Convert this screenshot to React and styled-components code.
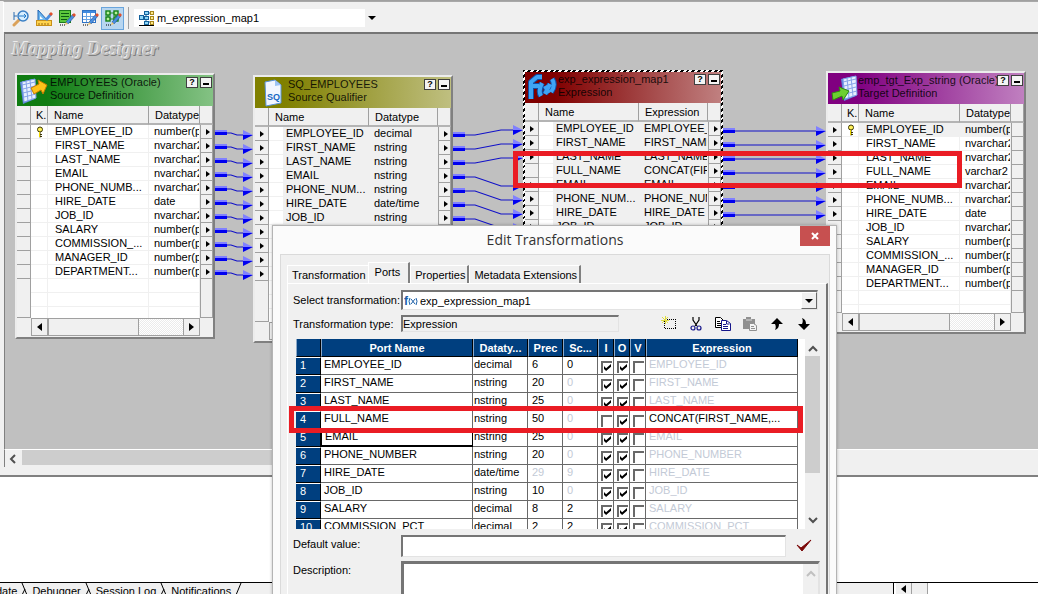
import React, { useState } from 'react'
import styled, { createGlobalStyle, css } from 'styled-components'

const GlobalStyle = createGlobalStyle`
    * {
        box-sizing: border-box;
    }

    body {
        margin: 0;
        background: #f0f0f0;
        color: #000;
        font-family: 'Liberation Sans', Arial, sans-serif;
        font-size: 11px;
        line-height: 14px;
    }

    button, input, select, textarea {
        font: inherit;
        color: inherit;
        margin: 0;
        padding: 0;
        border: 0;
        border-radius: 0;
        outline: none;
    }

    svg {
        display: block;
    }
`

const Screen = styled.div`
    position: relative;
    display: flex;
    flex-direction: column;
    height: 100vh;
    overflow: hidden;
    border-top: 1px solid #a0a0a0;
`

/* ---------- toolbar ---------- */

const Toolbar = styled.header`
    display: flex;
    align-items: center;
    height: 31px;
    margin-left: 3px;
    padding: 2px 0 0 5px;
    border-top: 1px solid #a8a8a8;
    border-left: 1px solid #fff;
    background: #f0f0f0;
`

const ToolButton = styled.button`
    display: flex;
    align-items: center;
    justify-content: center;
    width: 23px;
    height: 23px;
    background: ${p => (p.$active ? '#b8d6f0' : 'transparent')};
    border: 1px solid ${p => (p.$active ? '#6aa5dc' : 'transparent')};
`

const Divider = styled.span`
    width: 1px;
    height: 22px;
    margin: 0 5px 0 4px;
    background: #a0a0a0;
`

const MapPicker = styled.label`
    display: flex;
    align-items: center;
    width: 245px;
    height: 18px;
    padding-left: 5px;
    background: #fff;
`

const Select = styled.select`
    flex: 1;
    min-width: 0;
    appearance: none;
    background: transparent;
    padding-left: 2px;
`

const DropArrow = styled.span`
    display: flex;
    align-items: center;
    justify-content: center;
    width: ${p => (p.$raised ? '16px' : '14px')};
    align-self: stretch;
    background: #f0f0f0;
    pointer-events: none;
    ${p => p.$raised && css`
        border: 1px solid;
        border-color: #fff #696969 #696969 #fff;
    `}

    &::after {
        content: '';
        border: 4px solid transparent;
        border-top-color: #000;
        border-bottom: 0;
    }
`

/* ---------- canvas ---------- */

const Workspace = styled.main`
    position: relative;
    flex: 1;
    min-height: 0;
    margin-left: 4px;
    background: #c0c0c0;
    border-top: 2px solid #757575;
    border-left: 1px solid #808080;
    overflow: hidden;
`

const Watermark = styled.h1`
    margin: 4px 0 0 7px;
    font: italic bold 19px/22px 'Liberation Serif', 'Times New Roman', serif;
    color: #c0c0c0;
    text-shadow: -1px -1px 0 #ececec, 1px 1px 0 #808080;
`

const Wires = styled.svg`
    position: absolute;
    top: 0;
    left: 0;
    overflow: visible;
`

const Node = styled.section`
    position: absolute;
    left: ${p => p.$x}px;
    top: ${p => p.$y}px;
    width: 200px;
    background: #f0f0f0;
    border: 2px solid;
    border-color: #ececec #808080 #808080 #ececec;

    ${p => p.$selected && css`
        border-color: transparent;
        background:
            linear-gradient(#f0f0f0, #f0f0f0) padding-box,
            repeating-linear-gradient(135deg, #000 0 2px, #fff 2px 4px) border-box;
    `}
`

const NodeTitle = styled.div`
    display: flex;
    height: 31px;
    padding-right: 1px;
    background: linear-gradient(90deg, ${p => p.$from} 15%, ${p => p.$to});
`

const NodeIcon = styled.span`
    width: ${p => (p.$tight ? '30px' : '33px')};
    flex: none;
    padding: 1px 0 0 2px;
`

const NodeName = styled.div`
    flex: 1;
    min-width: 0;
    padding-top: 1px;
    line-height: 13px;
    white-space: nowrap;
    color: rgba(0, 0, 0, 0.85);
`

const NodeButton = styled.button`
    flex: none;
    width: 12px;
    height: 11px;
    margin: 2px 0 0 2px;
    background: #f4f4f4;
    border: 1px solid #404040;
    font: bold 9px/9px 'Liberation Sans', Arial, sans-serif;
    display: flex;
    align-items: center;
    justify-content: center;
`

const MinBar = styled.span`
    width: 6px;
    height: 2px;
    margin-top: 3px;
    background: #000;
`

const PortTable = styled.table`
    width: 100%;
    table-layout: fixed;
    border-spacing: 0;
    background: #fff;

    th, td {
        padding: 0;
        overflow: hidden;
        white-space: nowrap;
        text-align: left;
        font-weight: normal;
    }

    thead th {
        height: 19px;
        padding-left: 6px;
        background: #f0f0f0;
        border-right: 1px solid #a0a0a0;
        border-bottom: 2px solid #b4b4b4;
    }

    thead th.key {
        padding-left: 5px;
    }
`

const PortRow = styled.tr`
    td {
        height: 14px;
        line-height: 13px;
        padding-left: 5px;
        border-bottom: 1px solid #f0f0f0;
        border-right: 1px solid #f0f0f0;
        background: ${p => (p.$shaded ? '#f0f0f0' : '#fff')};
    }

    td.name {
        padding-left: ${p => (p.$keyed ? 7 : 2)}px;
    }

    td.key {
        padding-left: 5px;
        background: #fff;
    }
`

const Pin = styled.td`
    && {
        padding: 0;
        background: #f0f0f0;
        border-right: 1px solid #a0a0a0;
        border-left: ${p => (p.$end ? '1px solid #a0a0a0' : '0')};
        border-bottom: 1px solid #a0a0a0;
    }
`

const PinMark = styled.span`
    display: block;
    width: 0;
    margin-left: 5px;
    border: 3px solid transparent;
    border-left: 4px solid #000;
    border-right: 0;
`

const FillRow = styled.tr`
    td {
        height: ${p => p.$h}px;
        border-right: 1px solid #f0f0f0;
        background: repeating-linear-gradient(#fff 0 13px, #f0f0f0 13px 14px);
    }
`

const NodeFooter = styled.div`
    display: flex;
    height: 19px;
    padding: 0 13px 1px 14px;
`

const ScrollTrack = styled.div`
    display: flex;
    flex: 1;
    border: 1px solid #a0a0a0;
    background: repeating-conic-gradient(#fff 0 25%, #ebebeb 0 50%) 0 0 / 2px 2px;
`

const ScrollButton = styled.button`
    display: flex;
    align-items: center;
    justify-content: center;
    width: 16px;
    background: #f0f0f0;
    border: solid #a0a0a0;
    border-width: ${p => (p.$right ? '0 0 0 1px' : '0 1px 0 0')};
`

const ScrollThumb = styled.span`
    width: 91px;
    margin-right: auto;
    background: #f0f0f0;
    border: solid #a0a0a0;
    border-width: 0 1px;
`

const CanvasScroll = styled.div`
    display: flex;
    align-items: center;
    height: 18px;
    margin-left: 4px;
    padding-left: 4px;
    border-left: 1px solid #808080;
    border-top: 1px solid #fff;
    background: #f0f0f0;
`

const CanvasThumb = styled.span`
    align-self: stretch;
    width: 70%;
    margin: 0 0 2px 5px;
    background: #cdcdcd;
`

/* ---------- output panel ---------- */

const Output = styled.section`
    height: 108px;
    margin-top: 8px;
    background: #fff;
    border-top: 2px solid #808080;
    border-bottom: 1px solid #000;
`

const OutputTabs = styled.nav`
    display: flex;
    height: 11px;
    margin-left: -4px;
    overflow: hidden;
    background: #f0f0f0;
`

const OutputTab = styled.button`
    background: transparent;
    height: 16px;
    line-height: 16px;
    white-space: nowrap;
`

const TabSlash = styled.svg`
    flex: none;
    margin: 0 4px;
`

const OutputScroll = styled.div`
    display: flex;
    width: 145px;
    margin-left: auto;
    border-left: 1px solid #000;
    padding-left: 2px;
    background: #fff;
`

/* ---------- dialog ---------- */

const Dialog = styled.div`
    position: absolute;
    left: 272px;
    top: 224px;
    width: 565px;
    padding: 0 6px 0 7px;
    background: #fbfbfb;
    border: 1px solid #b4b4b4;
    box-shadow: 0 0 3px rgba(0, 0, 0, 0.25);
`

const DialogTitle = styled.div`
    display: flex;
    align-items: flex-start;
    height: 28px;

    h2 {
        flex: 1;
        margin: 0 -30px 0 0;
        font: 14px/28px 'Open Sans', 'Noto Sans', sans-serif;
        text-align: center;
        color: #333;
    }
`

const CloseButton = styled.button`
    display: flex;
    align-items: center;
    justify-content: center;
    width: 30px;
    height: 20px;
    background: #c75050;
`

const Client = styled.div`
    padding: 7px 1px 0 6px;
    background: #f0f0f0;
    border: 1px solid #dadada;
`

const Tabs = styled.div`
    display: flex;
    align-items: flex-end;
    height: 21px;
`

const Tab = styled.button`
    height: ${p => (p.$active ? '21px' : '18px')};
    padding: ${p => (p.$active ? '0 8px 3px 6px' : '0 2px 0 4px')};
    background: #f0f0f0;
    border: solid;
    border-width: 1px 2px 0 1px;
    border-color: #fff #808080 #fff #fff;
    white-space: nowrap;

    &:first-child {
        border-right: 0;
    }
`

const Panel = styled.div`
    padding: 6px 6px 0 5px;
    border: solid;
    border-width: 1px 2px 0 1px;
    border-color: #fff #757575 #fff #fff;
`

const Field = styled.div`
    display: flex;
    align-items: ${p => (p.$top ? 'flex-start' : 'center')};
    margin-bottom: ${p => p.$gap}px;
`

const Label = styled.label`
    flex: none;
    width: 108px;
    padding-top: ${p => (p.$top ? '2px' : '0')};
    white-space: nowrap;
`

const inset = css`
    border: solid;
    border-width: 2px 1px 1px 2px;
    border-color: #757575 #e3e3e3 #e3e3e3 #757575;
`

const Combo = styled.div`
    ${inset}
    display: flex;
    flex: 1;
    align-items: center;
    height: 20px;
    margin-right: 2px;
    padding-left: 1px;
    background: #fff;
`

const TypeBox = styled.input`
    ${inset}
    width: 218px;
    height: 17px;
    background: #f0f0f0;
`

const Tools = styled.div`
    display: flex;
    flex: 1;
    justify-content: space-between;
    padding: 0 8px 0 42px;
`

const IconButton = styled.button`
    display: flex;
    align-items: center;
    justify-content: center;
    width: 16px;
    height: 16px;
    background: transparent;
`

const GridWrap = styled.div`
    display: flex;
    height: 190px;
    margin: 0 0 6px 3px;
    overflow: hidden;
    background: #fff;
`

const Grid = styled.table`
    flex: 1;
    width: 0;
    height: max-content;
    table-layout: fixed;
    border-spacing: 0;

    th {
        height: 18px;
        padding: 0;
        overflow: hidden;
        background: #003f7f;
        border-right: 1px solid #000;
        border-bottom: 1px solid #000;
        border-left: 1px solid #8aa8c8;
        color: #fff;
        font: bold 11px/16px 'Liberation Sans', Arial, sans-serif;
        white-space: nowrap;
    }

    td {
        height: 18px;
        padding: 0;
        vertical-align: top;
        overflow: hidden;
        border-right: 1px solid #696969;
        border-bottom: 1px solid #696969;
        white-space: nowrap;
    }
`

const IndexCell = styled.th`
    && {
        padding-left: 4px;
        border-left: 0;
        border-top: 1px solid #fff;
        text-align: left;
        font: inherit;
        line-height: 14px;
        vertical-align: top;
    }
`

const TextCell = styled.td`
    && {
        padding-left: ${p => p.$pad || 3}px;
        color: ${p => (p.$muted ? '#c3cad6' : '#000')};
        ${p => p.$focused && css`
            border: 1px solid #000;
            border-top-width: 0;
            border-bottom-width: 2px;
        `}
    }
`

const CheckCell = styled.td`
    && {
        padding: 4px 0 0 3px;
    }
`

const Check = styled.input`
    display: block;
    position: relative;
    width: 11px;
    height: 12px;
    appearance: none;
    background: #fff;
    border: solid #696969;
    border-width: 2px 0 0 2px;

    &:checked::after {
        content: '';
        position: absolute;
        left: 1px;
        top: 1px;
        width: 7px;
        height: 7px;
        background: #000;
        clip-path: polygon(0 30%, 30% 60%, 100% 0, 100% 38%, 30% 100%, 0 70%);
    }
`

const VScroll = styled.div`
    display: flex;
    flex-direction: column;
    align-items: center;
    width: 15px;
    margin-left: ${p => p.$gap || 0}px;
    padding: 6px 0 4px;
    background: #f0f0f0;
`

const VThumb = styled.span`
    width: 15px;
    height: 117px;
    margin: 3px 0 auto;
    background: #cdcdcd;
`

const DefaultInput = styled.input`
    ${inset}
    flex: 1;
    height: 22px;
    background: #fff;
`

const ApplyButton = styled.button`
    width: 34px;
    padding-left: 10px;
    background: transparent;
`

const DescriptionBox = styled.div`
    ${inset}
    border-width: 3px 2px 2px 3px;
    display: flex;
    flex: 1;
    height: 60px;
    background: #fff;

    textarea {
        flex: 1;
        resize: none;
    }
`

const Highlight = styled.div`
    position: absolute;
    left: ${p => p.$x}px;
    top: ${p => p.$y}px;
    width: ${p => p.$w}px;
    height: ${p => p.$h}px;
    border: 5px solid #ea1c24;
    pointer-events: none;
`

/* ---------- icons ---------- */

const Pencil = () => (
    <g>
        <path d="M15 5l2 2-7 8-2-2z" fill="#4a8fe0" stroke="#1d4f9a" strokeWidth=".6" />
        <path d="M14 6l2-2 2 2-2 2z" fill="#e0502c" />
        <path d="M8 13l2 2-3 1z" fill="#f6c76a" />
        <path d="M2 16h1M4 16h1M6 16h1" stroke="#000" />
    </g>
)

const ZoomIcon = () => (
    <svg width="18" height="18">
        <path d="M2 3v8M2 7h3" stroke="#2a6db0" fill="none" />
        <path d="M2 16l5-5" stroke="#dba25a" strokeWidth="3" strokeLinecap="round" />
        <circle cx="11" cy="7" r="5" fill="#d8efff" stroke="#3a7fc4" strokeWidth="1.5" />
        <path d="M7 7h7M12 5l2 2-2 2" stroke="#1f78c8" fill="none" />
    </svg>
)

const RulerIcon = () => (
    <svg width="18" height="18">
        <path d="M3 1v11h10z" fill="#6db6ee" stroke="#1f64b4" />
        <path d="M5 7v3h3z" fill="#fff" />
        <rect x="1.5" y="11.5" width="15" height="5" fill="#ffd34d" stroke="#c8901a" />
        <path d="M4 14v2M7 14v2M10 14v2M13 14v2" stroke="#9a6a10" />
        <path d="M15 4l2 2-5 6-2-2z" fill="#4a8fe0" />
        <path d="M14 5l2-2 2 2-2 2z" fill="#e0502c" />
    </svg>
)

const ListIcon = () => (
    <svg width="18" height="18">
        <rect x="1.5" y="1.5" width="11" height="12" fill="#5cc83c" stroke="#1c7a1c" />
        <path d="M3 4.5h8M3 7.5h8M3 10.5h6" stroke="#0c5a14" />
        <Pencil />
    </svg>
)

const TableIcon = () => (
    <svg width="18" height="18">
        <rect x="1.5" y="1.5" width="13" height="12" fill="#fff" stroke="#2f73c4" />
        <path d="M2 3h12" stroke="#3f8be0" strokeWidth="2" />
        <path d="M2 7.5h12M2 10.5h12M5.5 4v9M9.5 4v9" stroke="#6aa5e4" />
        <Pencil />
    </svg>
)

const MapEditIcon = () => (
    <svg width="18" height="18">
        <path d="M5 4h7M5 10h7M4 4v6M12 4v6" stroke="#1f8a1f" fill="none" />
        <g fill="#b6f09a" stroke="#148014" strokeWidth="1.4">
            <rect x="2" y="2" width="4" height="4" />
            <rect x="10" y="2" width="4" height="4" />
            <rect x="2" y="8" width="4" height="4" />
            <rect x="10" y="8" width="4" height="4" />
        </g>
        <Pencil />
    </svg>
)

const MappingIcon = () => (
    <svg width="16" height="16">
        <path d="M3 7h6M7 3v9M7 3h4M7 12h4" stroke="#1c5f9a" fill="none" />
        <g fill="#8fd8f8" stroke="#14619c">
            <rect x=".5" y="5.5" width="4" height="4" />
            <rect x="5.5" y="1.5" width="4" height="3" />
            <rect x="5.5" y="6.5" width="4" height="3" />
            <rect x="5.5" y="11.5" width="4" height="3" />
        </g>
        <g fill="#ffe98a" stroke="#a8871c">
            <rect x="11.5" y="1.5" width="3" height="3" />
            <rect x="11.5" y="6.5" width="3" height="3" />
            <rect x="11.5" y="11.5" width="3" height="3" />
        </g>
        <path d="M0 15.5h15" stroke="#000" />
    </svg>
)

const Sheet = () => (
    <g>
        <path d="M1 6l13-3 2 20-12 5z" fill="#5f86dc" />
        <path d="M3 6l13-3 1 19-12 4z" fill="#e6efff" stroke="#7fa0ea" />
        <path d="M3 9l13-3M4 13l12-3M4 17l12-3M5 21l12-3M7 5l2 20M11 4l2 19" stroke="#86a4e8" />
    </g>
)

const SourceIcon = () => (
    <svg width="30" height="30">
        <Sheet />
        <path d="M12 12l8-4-1-4 9 5-4 9-2-4-7 4z" fill="#ffc21a" stroke="#c47a00" />
    </svg>
)

const TargetIcon = () => (
    <svg width="28" height="30">
        <g transform="translate(10 -1)"><Sheet /></g>
        <path d="M2 19l8-2-1-4 10 4-6 9-1-4-9 4z" fill="#6cd030" stroke="#2f8a10" />
    </svg>
)

const SqIcon = () => (
    <svg width="30" height="30">
        <path d="M8 4l10-2 6 5v18l-15 3z" fill="#f2f7ff" stroke="#5a93dc" />
        <path d="M18 2v6l6-1z" fill="#9cc4f4" />
        <text x="10" y="22" fontFamily="Liberation Sans, sans-serif" fontWeight="bold" fontSize="9" fill="#1668c4">SQ</text>
    </svg>
)

const FxIcon = () => (
    <svg width="30" height="30">
        <g fill="none" stroke="#0d4fa8" strokeWidth="6" strokeLinejoin="round">
            <path d="M4 26V9l6-5h5M3 13h9M15 10q-4 8-1 13M18 13l4 7M23 11l-5 10M25 6q4 6-1 13" />
        </g>
        <g fill="none" stroke="#3fa4f4" strokeWidth="4" strokeLinejoin="round">
            <path d="M4 26V9l6-5h5M3 13h9M15 10q-4 8-1 13M18 13l4 7M23 11l-5 10M25 6q4 6-1 13" />
        </g>
    </svg>
)

const KeyIcon = () => (
    <svg width="8" height="12">
        <circle cx="4" cy="3.5" r="2.5" fill="#fff15a" stroke="#3a3400" />
        <path d="M4 6v5.5M4 8.5h2M4 10.5h2" stroke="#3a3400" />
        <path d="M3.5 6v5" stroke="#f0d800" />
    </svg>
)

const Chevron = ({ d, color = '#505050', w = 10, h = 8 }) => (
    <svg width={w} height={h}>
        <path d={d} fill="none" stroke={color} strokeWidth="2" />
    </svg>
)

const Triangle = ({ left }) => (
    <svg width="5" height="8">
        <path d={left ? 'M5 0v8L0 4z' : 'M0 0v8l5-4z'} />
    </svg>
)

const NewIcon = () => (
    <svg width="16" height="16" shapeRendering="crispEdges">
        <rect x="3.5" y="3.5" width="11" height="9" fill="none" stroke="#000" strokeDasharray="1 1" />
        <path d="M4.5 0v8M0 4.5h8M1 1l6 6M7 1L1 7" stroke="#e0dc40" />
    </svg>
)

const CutIcon = () => (
    <svg width="16" height="16">
        <path d="M5 1v3l4 6M11 1v3l-4 6" fill="none" stroke="#000" strokeWidth="1.2" />
        <circle cx="5" cy="12" r="2" fill="none" stroke="#16168a" strokeWidth="1.2" />
        <circle cx="11" cy="12" r="2" fill="none" stroke="#16168a" strokeWidth="1.2" />
    </svg>
)

const CopyIcon = () => (
    <svg width="16" height="16">
        <path d="M.5 1.5h5l3 3v7h-8z" fill="#fff" stroke="#000" />
        <path d="M2 5.5h3M2 7.5h4M2 9.5h4" stroke="#000" />
        <path d="M6.5 4.5h5l4 3v7h-9z" fill="#fff" stroke="#16168a" />
        <path d="M8 8.5h3M8 10.5h5M8 12.5h5M11.5 5v3h3" fill="none" stroke="#16168a" />
    </svg>
)

const PasteIcon = () => (
    <svg width="16" height="16">
        <path d="M1 3h3V1h5v2h4v10H1z" fill="#909090" />
        <path d="M4 4h6" stroke="#d8d8d8" />
        <path d="M7.5 7.5h4l3 2v5h-7z" fill="#f4f4f4" stroke="#909090" />
        <path d="M9 10.5h3M9 12.5h4" stroke="#909090" />
    </svg>
)

const MoveIcon = ({ down }) => (
    <svg width="14" height="14">
        <path
            d="M7 1l6 6H9c0 3-1 5-4 6 1-2 1-4 0-6H1z"
            transform={down ? 'matrix(1 0 0 -1 0 14)' : undefined}
        />
    </svg>
)

/* ---------- data ---------- */

const tableRows = [
    ['EMPLOYEE_ID', 'number(p,s)'],
    ['FIRST_NAME', 'nvarchar2'],
    ['LAST_NAME', 'nvarchar2'],
    ['EMAIL', 'nvarchar2'],
    ['PHONE_NUMB...', 'nvarchar2'],
    ['HIRE_DATE', 'date'],
    ['JOB_ID', 'nvarchar2'],
    ['SALARY', 'number(p,s)'],
    ['COMMISSION_...', 'number(p,s)'],
    ['MANAGER_ID', 'number(p,s)'],
    ['DEPARTMENT...', 'number(p,s)'],
]

const nodes = [
    {
        id: 'src', x: 10, y: 39, title: 'EMPLOYEES (Oracle)', kind: 'Source Definition',
        from: '#0f7c12', to: '#84c284', icon: <SourceIcon />, keyed: true, type: 'Datatype', fill: 39,
        rows: tableRows, ins: [],
    },
    {
        id: 'sq', x: 248, y: 41, title: 'SQ_EMPLOYEES', kind: 'Source Qualifier',
        from: '#808000', to: '#bfbf80', icon: <SqIcon />, type: 'Datatype', fill: 41, shaded: true,
        rows: [
            ['EMPLOYEE_ID', 'decimal'],
            ['FIRST_NAME', 'nstring'],
            ['LAST_NAME', 'nstring'],
            ['EMAIL', 'nstring'],
            ['PHONE_NUM...', 'nstring'],
            ['HIRE_DATE', 'date/time'],
            ['JOB_ID', 'nstring'],
            ['SALARY', 'decimal'],
            ['COMMISSIO...', 'decimal'],
            ['MANAGER_ID', 'decimal'],
            ['DEPARTME...', 'decimal'],
        ],
    },
    {
        id: 'exp', x: 518, y: 36, title: 'exp_expression_map1', kind: 'Expression',
        from: '#800000', to: '#c08080', icon: <FxIcon />, type: 'Expression', fill: 20, shaded: true, selected: true,
        ins: [0, 1, 2, 4, 5, 6, 7],
        rows: [
            ['EMPLOYEE_ID', 'EMPLOYEE_ID'],
            ['FIRST_NAME', 'FIRST_NAME'],
            ['LAST_NAME', 'LAST_NAME'],
            ['FULL_NAME', 'CONCAT(FIRST_NAME'],
            ['EMAIL', 'EMAIL'],
            ['PHONE_NUM...', 'PHONE_NUMBER'],
            ['HIRE_DATE', 'HIRE_DATE'],
            ['JOB_ID', 'JOB_ID'],
        ],
    },
    {
        id: 'tgt', x: 821, y: 37, title: 'emp_tgt_Exp_string (Oracle)', kind: 'Target Definition',
        from: '#800080', to: '#c080c0', icon: <TargetIcon />, keyed: true, type: 'Datatype', fill: 22,
        rows: [...tableRows.slice(0, 3), ['FULL_NAME', 'varchar2'], ...tableRows.slice(3)],
        ins: [0, 1, 2, 3, 4, 5, 6],
        outs: [],
    },
]

const ports = [
    ['EMPLOYEE_ID', 'decimal', '6', '0', true],
    ['FIRST_NAME', 'nstring', '20', '0', true],
    ['LAST_NAME', 'nstring', '25', '0', true],
    ['FULL_NAME', 'nstring', '50', '0', false, 'CONCAT(FIRST_NAME,...'],
    ['EMAIL', 'nstring', '25', '0', true],
    ['PHONE_NUMBER', 'nstring', '20', '0', true],
    ['HIRE_DATE', 'date/time', '29', '9', true],
    ['JOB_ID', 'nstring', '10', '0', true],
    ['SALARY', 'decimal', '8', '2', true],
    ['COMMISSION_PCT', 'decimal', '2', '2', true],
]

// x1, y1 leave the right pin, x2, y2 reach the left pin
const wires = [
    ...tableRows.map((r, i) => [210, 99 + i * 14, 248, 101 + i * 14]),
    ...[0, 1, 2, 4, 5, 6, 7].map((row, i) => [448, 101 + i * 14, 518, 96 + row * 14]),
    ...[0, 1, 2, 3, 4, 5, 6].map(i => [718, 97 + i * 14, 821, 97 + i * 14]),
]

function Wire({ points: [x1, y1, x2, y2] }) {
    const bend = x2 - x1 > 50 ? 22 : 16
    return (
        <g>
            <rect x={x1} y={y1 - 3} width="12" height="2" fill="#8080ff" />
            <rect x={x1} y={y1 - 1} width="12" height="3" fill="#0000f0" />
            <path
                d={`M${x1 + 12} ${y1}H${x1 + bend}L${x2 - bend} ${y2}H${x2 - 8}`}
                fill="none"
                stroke="#1010c8"
                strokeWidth="1.2"
            />
            <path d={`M${x2 - 10} ${y2 - 5}L${x2} ${y2}h-10z`} fill="#8080ff" />
            <path d={`M${x2 - 10} ${y2 + 5}L${x2} ${y2}h-10z`} fill="#0000f0" />
        </g>
    )
}

function MapNode({ node }) {
    const has = (list, i) => !list || list.includes(i)
    return (
        <Node $x={node.x} $y={node.y} $selected={node.selected}>
            <NodeTitle $from={node.from} $to={node.to}>
                <NodeIcon $tight={node.title.length > 24}>{node.icon}</NodeIcon>
                <NodeName>{node.title}<br />{node.kind}</NodeName>
                <NodeButton aria-label="Help">?</NodeButton>
                <NodeButton aria-label="Minimize"><MinBar /></NodeButton>
            </NodeTitle>
            <PortTable>
                <colgroup>
                    <col style={{ width: 14 }} />
                    <col style={{ width: node.keyed ? 17 : 15 }} />
                    <col style={{ width: node.keyed ? 101 : 85 }} />
                    <col />
                    <col style={{ width: 13 }} />
                </colgroup>
                <thead>
                    <tr>
                        <th />
                        {node.keyed && <th className="key">K.</th>}
                        <th colSpan={node.keyed ? 1 : 2}>Name</th>
                        <th>{node.type}</th>
                        <th />
                    </tr>
                </thead>
                <tbody>
                    {node.rows.map(([name, type], i) => (
                        <PortRow key={name} $keyed={node.keyed} $shaded={node.shaded || (node.id === 'tgt' && i === 0)}>
                            <Pin>{has(node.ins, i) && <PinMark />}</Pin>
                            <td className="key">{node.keyed && i === 0 && <KeyIcon />}</td>
                            <td className="name">{name}</td>
                            <td>{type}</td>
                            <Pin $end>{has(node.outs, i) && <PinMark />}</Pin>
                        </PortRow>
                    ))}
                    <FillRow $h={node.fill}>
                        <Pin />
                        <td />
                        <td />
                        <td />
                        <Pin $end />
                    </FillRow>
                </tbody>
            </PortTable>
            <NodeFooter>
                <ScrollTrack>
                    <ScrollButton aria-label="Scroll left"><Triangle left /></ScrollButton>
                    <ScrollThumb />
                    <ScrollButton $right aria-label="Scroll right"><Triangle /></ScrollButton>
                </ScrollTrack>
            </NodeFooter>
        </Node>
    )
}

function PortGrid() {
    const [rows, setRows] = useState(ports.map(p => [p[4], true, false]))

    const toggle = (row, col) => {
        setRows(rows.map((r, i) => (i === row ? r.map((v, c) => (c === col ? !v : v)) : r)))
    }

    return (
        <GridWrap>
            <Grid>
                <colgroup>
                    {[25, 152, 55, 35, 35, 16, 16, 16].map((w, i) => <col key={i} style={{ width: w }} />)}
                    <col />
                </colgroup>
                <thead>
                    <tr>
                        <th />
                        <th>Port Name</th>
                        <th>Dataty...</th>
                        <th>Prec</th>
                        <th>Sc...</th>
                        <th>I</th>
                        <th>O</th>
                        <th>V</th>
                        <th>Expression</th>
                    </tr>
                </thead>
                <tbody>
                    {ports.map(([name, type, prec, scale, , expr], i) => (
                        <tr key={name}>
                            <IndexCell>{i + 1}</IndexCell>
                            <TextCell $focused={name === 'EMAIL'}>{name}</TextCell>
                            <TextCell $pad={1}>{type}</TextCell>
                            <TextCell $pad={4} $muted={type === 'date/time'}>{prec}</TextCell>
                            <TextCell $pad={4} $muted={type !== 'decimal'}>{scale}</TextCell>
                            {rows[i].map((checked, c) => (
                                <CheckCell key={c}>
                                    <Check
                                        type="checkbox"
                                        aria-label={`${name} ${'IOV'[c]}`}
                                        checked={checked}
                                        onChange={() => toggle(i, c)}
                                    />
                                </CheckCell>
                            ))}
                            <TextCell $muted={!expr}>{expr || name}</TextCell>
                        </tr>
                    ))}
                </tbody>
            </Grid>
            <VScroll $gap={7}>
                <Chevron d="M1 6l4-4 4 4" />
                <VThumb />
                <Chevron d="M1 1l4 4 4-4" />
            </VScroll>
        </GridWrap>
    )
}

function EditDialog() {
    const [tab, setTab] = useState('Ports')

    return (
        <Dialog role="dialog" aria-labelledby="dialog-title">
            <DialogTitle>
                <h2 id="dialog-title">Edit Transformations</h2>
                <CloseButton aria-label="Close">
                    <Chevron d="M1 1l6 6M7 1l-6 6" color="#fff" w={8} h={8} />
                </CloseButton>
            </DialogTitle>
            <Client>
                <Tabs role="tablist">
                    {['Transformation', 'Ports', 'Properties', 'Metadata Extensions'].map(t => (
                        <Tab key={t} role="tab" aria-selected={t === tab} $active={t === tab} onClick={() => setTab(t)}>
                            {t}
                        </Tab>
                    ))}
                </Tabs>
                <Panel>
                    <Field $gap={5}>
                        <Label htmlFor="transformation">Select transformation:</Label>
                        <Combo>
                            <svg width="14" height="14">
                                <text x="0" y="11" fontFamily="Liberation Sans, sans-serif" fontWeight="bold" fontSize="12" fill="#1b5fa8">f</text>
                                <path d="M6 4q-2 3 0 7M12 4q2 3 0 7M7 5l4 5M11 5l-4 5" fill="none" stroke="#1b5fa8" />
                            </svg>
                            <Select id="transformation">
                                <option>exp_expression_map1</option>
                            </Select>
                            <DropArrow $raised />
                        </Combo>
                    </Field>
                    <Field $gap={7}>
                        <Label htmlFor="type">Transformation type:</Label>
                        <TypeBox id="type" readOnly value="Expression" />
                        <Tools>
                            <IconButton aria-label="New port"><NewIcon /></IconButton>
                            <IconButton aria-label="Cut"><CutIcon /></IconButton>
                            <IconButton aria-label="Copy"><CopyIcon /></IconButton>
                            <IconButton aria-label="Paste"><PasteIcon /></IconButton>
                            <IconButton aria-label="Move up"><MoveIcon /></IconButton>
                            <IconButton aria-label="Move down"><MoveIcon down /></IconButton>
                        </Tools>
                    </Field>
                    <PortGrid />
                    <Field $top $gap={4}>
                        <Label $top htmlFor="default">Default value:</Label>
                        <DefaultInput id="default" />
                        <ApplyButton aria-label="Validate">
                            <svg width="17" height="18">
                                <path d="M1 10l4 3L15 5 6 16z" fill="#7a0808" stroke="#7a0808" />
                            </svg>
                        </ApplyButton>
                    </Field>
                    <Field $top>
                        <Label $top htmlFor="description">Description:</Label>
                        <DescriptionBox>
                            <textarea id="description" />
                            <VScroll>
                                <Chevron d="M1 6l4-4 4 4" color="#c0c0c0" />
                            </VScroll>
                        </DescriptionBox>
                    </Field>
                </Panel>
            </Client>
        </Dialog>
    )
}

function App() {
    return (
        <Screen>
            <GlobalStyle />
            <Toolbar>
                <ToolButton aria-label="Source Analyzer"><ZoomIcon /></ToolButton>
                <ToolButton aria-label="Target Designer"><RulerIcon /></ToolButton>
                <ToolButton aria-label="Transformation Developer"><ListIcon /></ToolButton>
                <ToolButton aria-label="Mapplet Designer"><TableIcon /></ToolButton>
                <ToolButton $active aria-label="Mapping Designer"><MapEditIcon /></ToolButton>
                <Divider />
                <MapPicker>
                    <MappingIcon />
                    <Select aria-label="Mapping">
                        <option>m_expression_map1</option>
                    </Select>
                    <DropArrow />
                </MapPicker>
            </Toolbar>

            <Workspace>
                <Watermark>Mapping Designer</Watermark>
                <Wires width="100%" height="100%">
                    {wires.map((w, i) => <Wire key={i} points={w} />)}
                </Wires>
                {nodes.map(n => <MapNode key={n.id} node={n} />)}
            </Workspace>
            <CanvasScroll>
                <Chevron d="M6 1L2 5l4 4" w={8} h={10} />
                <CanvasThumb />
            </CanvasScroll>

            <Output />
            <OutputTabs>
                {['date', 'Debugger', 'Session Log', 'Notifications'].map((t, i) => (
                    <React.Fragment key={t}>
                        <OutputTab>{t}</OutputTab>
                        <TabSlash width="7" height="14">
                            <path d={i < 3 ? 'M1 0l5 12M4 6L1 12' : 'M6 0L1 12'} fill="none" stroke="#000" />
                        </TabSlash>
                    </React.Fragment>
                ))}
                <OutputScroll>
                    <ScrollButton aria-label="Scroll output left"><Triangle left /></ScrollButton>
                    <ScrollButton aria-label="Scroll output"></ScrollButton>
                </OutputScroll>
            </OutputTabs>

            <EditDialog />
            <Highlight $x={513} $y={150} $w={449} $h={37} />
            <Highlight $x={289} $y={405} $w={514} $h={27} />
        </Screen>
    )
}

export default App
